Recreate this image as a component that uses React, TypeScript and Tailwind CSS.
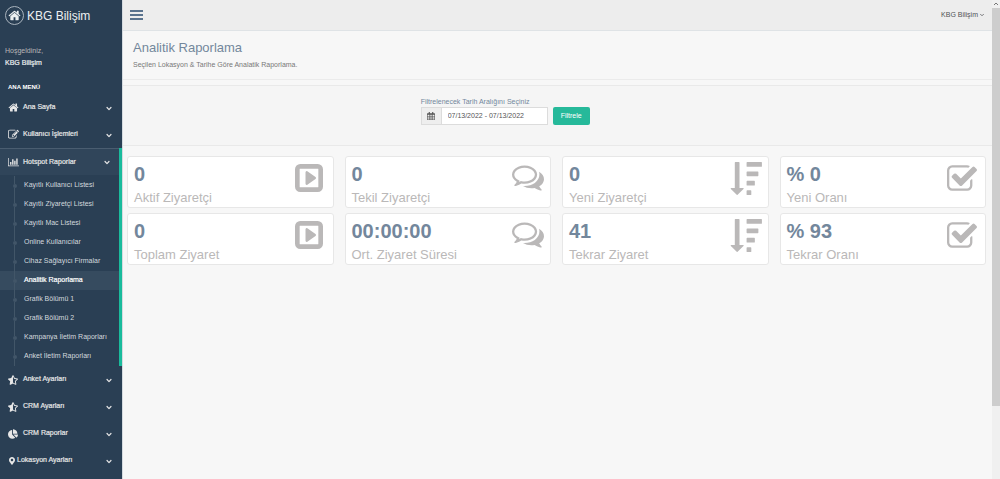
import { useState, type ReactNode } from 'react';
import { FaChartPie, FaMapMarkerAlt, FaStarHalfAlt } from 'react-icons/fa';

const HOME =
  'M1472 992v480q0 26-19 45t-45 19h-384v-384h-256v384h-384q-26 0-45-19t-19-45v-480q0-1 .5-3t.5-3l575-474 575 474q1 2 1 6zm223-69l-62 74q-8 9-21 11h-3q-13 0-21-7l-692-577-692 577q-12 8-24 7-13-2-21-11l-62-74q-8-10-7-23.5t11-21.5l719-599q32-26 76-26t76 26l244 204v-195q0-14 9-23t23-9h192q14 0 23 9t9 23v408l219 182q10 8 11 21.5t-7 23.5z';
const EDIT =
  'M888 1184l116-116-152-152-116 116v56h96v96h56zm440-720q-16-16-33 1l-350 350q-17 17-1 33t33-1l350-350q17-17 1-33zm80 594v190q0 119-84.5 203.5t-203.5 84.5h-832q-119 0-203.5-84.5t-84.5-203.5v-832q0-119 84.5-203.5t203.5-84.5h832q63 0 117 25 15 7 18 23 3 17-9 29l-49 49q-14 14-32 8-23-6-45-6h-832q-66 0-113 47t-47 113v832q0 66 47 113t113 47h832q66 0 113-47t47-113v-126q0-13 9-22l64-64q15-15 35-7t20 29zm-96-738l288 288-672 672h-288v-288zm444 132l-92 92-288-288 92-92q28-28 68-28t68 28l152 152q28 28 28 68t-28 68z';
const CHART =
  'M640 896v512h-256v-512h256zm384-512v1024h-256v-1024h256zm1024 1152v128h-2048v-1536h128v1408h1920zm-640-896v768h-256v-768h256zm384-384v1152h-256v-1152h256z';
const CHEVRON =
  'M1683 808l-742 741q-19 19-45 19t-45-19l-742-741q-19-19-19-45.5t19-45.5l166-165q19-19 45-19t45 19l531 531 531-531q19-19 45-19t45 19l166 165q19 19 19 45.5t-19 45.5z';
const PLAY =
  'M1280 896q0 33-27 52l-448 320q-31 23-66 4-34-17-34-56v-640q0-39 34-56 35-19 66 4l448 320q27 19 27 52zm128 480v-960q0-14-9-23t-23-9h-960q-14 0-23 9t-9 23v960q0 14 9 23t23 9h960q14 0 23-9t9-23zm256-960v960q0 119-84.5 203.5t-203.5 84.5h-960q-119 0-203.5-84.5t-84.5-203.5v-960q0-119 84.5-203.5t203.5-84.5h960q119 0 203.5 84.5t84.5 203.5z';
const COMMENTS =
  'M704 384q-153 0-286 52t-211.5 141-78.5 191q0 82 53 158t149 132l97 56-35 84q34-20 62-39l44-31 53 10q78 14 153 14 153 0 286-52t211.5-141 78.5-191-78.5-191-211.5-141-286-52zm0-128q191 0 353.5 68.5t256.5 186.5 94 257-94 257-256.5 186.5-353.5 68.5q-86 0-176-16-124 88-278 128-36 9-86 16h-3q-11 0-20.5-8t-11.5-21q-1-3-1-6.5t.5-6.5 2-6l2.5-5 3.5-5.5 4-5 4.5-5 4-4.5q5-6 23-25t26-29.5 22.5-29 25-38.5 20.5-44q-124-72-195-177t-71-224q0-139 94-257t256.5-186.5 353.5-68.5zm822 1169q10 24 20.5 44t25 38.5 22.5 29 26 29.5 23 25q1 1 4 4.5t4.5 5 4 5 3.5 5.5l2.5 5 2 6 .5 6.5-1 6.5q-3 14-13 22t-22 7q-50-7-86-16-154-40-278-128-90 16-176 16-271 0-472-132 58 4 88 4 161 0 309-45t264-129q125-92 192-212t67-254q0-77-23-152 129 71 204 178t75 230q0 120-71 224.5t-195 176.5z';
const SORT =
  'M736 1440q0 12-10 24l-319 319q-10 9-23 9-12 0-23-9l-320-320q-15-16-7-35 8-20 30-20h192v-1376q0-14 9-23t23-9h192q14 0 23 9t9 23v1376h192q14 0 23 9t9 23zM928 1536h192q32 0 32 32v192q0 32-32 32h-192q-32 0-32-32v-192q0-32 32-32zM928 1024h384q32 0 32 32v192q0 32-32 32h-384q-32 0-32-32v-192q0-32 32-32zM928 512h576q32 0 32 32v192q0 32-32 32h-576q-32 0-32-32v-192q0-32 32-32zM928 0h768q32 0 32 32v192q0 32-32 32h-768q-32 0-32-32v-192q0-32 32-32z';
const CHECK =
  'M1472 930v318q0 119-84.5 203.5t-203.5 84.5h-832q-119 0-203.5-84.5t-84.5-203.5v-832q0-119 84.5-203.5t203.5-84.5h832q63 0 117 25 15 7 18 23 3 17-9 29l-49 49q-10 10-23 10-3 0-9-2-23-6-45-6h-832q-66 0-113 47t-47 113v832q0 66 47 113t113 47h832q66 0 113-47t47-113v-254q0-13 9-22l64-64q10-10 23-10 6 0 12 3 20 8 20 29zm231-489l-814 814q-24 24-57 24t-57-24l-430-430q-24-24-24-57t24-57l110-110q24-24 57-24t57 24l263 263 647-647q24-24 57-24t57 24l110 110q24 24 24 57t-24 57z';

function Glyph({ d, box = '0 0 1792 1792', className }: { d: string; box?: string; className: string }) {
  return (
    <svg viewBox={box} fill="currentColor" aria-hidden="true" className={className}>
      <path d={d} />
    </svg>
  );
}

const reports = [
  'Kayıtlı Kullanıcı Listesi',
  'Kayıtlı Ziyaretçi Listesi',
  'Kayıtlı Mac Listesi',
  'Online Kullanıcılar',
  'Cihaz Sağlayıcı Firmalar',
  'Analitik Raporlama',
  'Grafik Bölümü 1',
  'Grafik Bölümü 2',
  'Kampanya İletim Raporları',
  'Anket İletim Raporları',
];

const play = <Glyph d={PLAY} box="128 128 1536 1536" className="mr-1 size-7" />;
const comments = <Glyph d={COMMENTS} box="0 256 1792 1408" className="h-[26px] w-8" />;
const sort = <Glyph d={SORT} box="0 0 1728 1792" className="h-[33px] w-8" />;
const check = <Glyph d={CHECK} box="64 128 1664 1408" className="mr-[2px] h-[26px] w-[30px]" />;

const stats = [
  { value: '0', label: 'Aktif Ziyaretçi', icon: play },
  { value: '0', label: 'Tekil Ziyaretçi', icon: comments },
  { value: '0', label: 'Yeni Ziyaretçi', icon: sort },
  { value: '% 0', label: 'Yeni Oranı', icon: check },
  { value: '0', label: 'Toplam Ziyaret', icon: play },
  { value: '00:00:00', label: 'Ort. Ziyaret Süresi', icon: comments },
  { value: '41', label: 'Tekrar Ziyaret', icon: sort },
  { value: '% 93', label: 'Tekrar Oranı', icon: check },
];

function MenuItem({
  icon,
  label,
  open = false,
  tight = false,
  onClick,
}: {
  icon: ReactNode;
  label: string;
  open?: boolean;
  tight?: boolean;
  onClick?: () => void;
}) {
  return (
    <button
      type="button"
      aria-expanded={open}
      onClick={onClick}
      className={`flex h-[27px] w-full items-center pl-2 text-left text-[7px] text-[#e7e7e7] ${
        open ? 'border-t border-[#4a5d70] bg-[#30455a] pr-[9px]' : 'pr-[10px]'
      }`}
    >
      <span className={tight ? 'w-[9px]' : 'w-[15px]'}>{icon}</span>
      <span className="flex-1 whitespace-nowrap [-webkit-text-stroke:0.2px]">{label}</span>
      <Glyph d={CHEVRON} className="size-[6px]" />
    </button>
  );
}

function Sidebar() {
  const [open, setOpen] = useState(true);
  const [active, setActive] = useState('Analitik Raporlama');

  return (
    <aside className="w-[123px] shrink-0 border-r border-[#d5dbe0] bg-[#2a3f54] text-[#ecf0f1]">
      <a href="#" className="flex h-[31px] items-center gap-[3px] pl-[5px] text-xs">
        <span className="flex size-[19px] items-center justify-center rounded-full border border-[#a9b3bd]">
          <Glyph d={HOME} className="size-[13px]" />
        </span>
        KBG Bilişim
      </a>

      <div className="mt-[14px] pl-[5px] text-[7px] leading-3">
        <p className="text-[#bab8b8]">Hoşgeldiniz,</p>
        <p className="[-webkit-text-stroke:0.2px]">KBG Bilişim</p>
      </div>

      <h3 className="mt-[13px] h-3 pl-2 text-[6px] leading-[10px] font-bold text-white">ANA MENÜ</h3>

      <nav>
        <MenuItem icon={<Glyph d={HOME} className="size-[11px]" />} label="Ana Sayfa" />
        <MenuItem icon={<Glyph d={EDIT} className="size-[11px]" />} label="Kullanıcı İşlemleri" />
        <div className="border-r-[3px] border-[#1abb9c]">
          <MenuItem
            icon={<Glyph d={CHART} box="0 0 2048 1792" className="h-[10px] w-[11px]" />}
            label="Hotspot Raporlar"
            open={open}
            onClick={() => setOpen(!open)}
          />
          {open && (
            <ul className="pt-px">
              {reports.map((item) => (
                <li key={item} className={item === active ? 'bg-[#364b5f]' : ''}>
                  <a
                    href="#"
                    onClick={() => setActive(item)}
                    className={`flex h-[19px] items-center text-[7px] whitespace-nowrap ${
                      item === active ? 'text-white [-webkit-text-stroke:0.2px]' : 'text-[#d3d9de]'
                    }`}
                  >
                    <span className="mr-[7px] ml-3 flex h-full w-[5px] flex-col items-center">
                      <span className="w-px flex-1 bg-[#425668]" />
                      <span className="size-1 rounded-full bg-[#425668]" />
                      <span className="w-px flex-1 bg-[#425668]" />
                    </span>
                    {item}
                  </a>
                </li>
              ))}
            </ul>
          )}
        </div>
        <MenuItem icon={<FaStarHalfAlt className="size-[10px]" />} label="Anket Ayarları" />
        <MenuItem icon={<FaStarHalfAlt className="size-[10px]" />} label="CRM Ayarları" />
        <MenuItem icon={<FaChartPie className="size-[10px]" />} label="CRM Raporlar" />
        <MenuItem icon={<FaMapMarkerAlt className="size-2" />} label="Lokasyon Ayarları" tight />
      </nav>
    </aside>
  );
}

function App() {
  const [range, setRange] = useState('07/13/2022 - 07/13/2022');

  return (
    <div className="flex min-h-screen bg-[#f7f7f7] font-['Liberation_Sans',Arial,sans-serif] text-[#73879c]">
      <Sidebar />

      <div className="min-w-0 flex-1">
        <header className="flex h-[31px] items-center justify-between border-b border-[#dfe3e6] bg-[#ededed] pr-2 pl-[7px]">
          <button type="button" aria-label="Menü" className="flex w-[13px] flex-col gap-[2px] text-[#5a738e]">
            <span className="h-[2px] bg-current" />
            <span className="h-[2px] bg-current" />
            <span className="h-[2px] bg-current" />
          </button>
          <button type="button" className="flex items-center gap-[2px] text-[7px] text-[#515356]">
            KBG Bilişim
            <svg viewBox="0 0 8 8" fill="none" stroke="currentColor" aria-hidden="true" className="size-1">
              <path strokeWidth="1.5" d="M0.5 2l3.5 3.5l3.5-3.5" />
            </svg>
          </button>
        </header>

        <main>
          <div className="h-[49px] border-b border-[#ebebeb] pt-2 pl-[10px]">
            <h1 className="text-[13px] leading-[18px]">Analitik Raporlama</h1>
            <p className="mt-[3px] text-[7px] leading-[10px] text-[#777]">
              Seçilen Lokasyon &amp; Tarihe Göre Analatik Raporlama.
            </p>
          </div>

          <form
            className="mt-[5px] grid h-[61px] grid-cols-3 border-y border-[#e9e9e9] bg-[#f5f5f5] pt-[11px]"
            onSubmit={(e) => e.preventDefault()}
          >
            <div className="col-start-2 flex items-start gap-[5px] pl-2">
              <div className="flex flex-col">
                <label htmlFor="range" className="text-[7px] leading-[10px]">
                  Filtrelenecek Tarih Aralığını Seçiniz
                </label>
                <div className="flex h-[18px] w-[127px] border border-[#dcdcdc] bg-white">
                  <span className="flex w-5 items-center justify-center border-r border-[#dcdcdc] bg-[#eee] text-[#555]">
                    <svg viewBox="0 0 14 14" fill="currentColor" aria-hidden="true" className="size-[8px]">
                      <path
                        fillRule="evenodd"
                        d="M1 2h2V0h2v2h4V0h2v2h2q1 0 1 1v10q0 1-1 1H1q-1 0-1-1V3q0-1 1-1zM1 5v2h2.500V5zM4.500 5v2h2V5zM7.500 5v2h2V5zM10.500 5v2H13V5zM1 8v2h2.500V8zM4.500 8v2h2V8zM7.500 8v2h2V8zM10.500 8v2H13V8zM1 11v2h2.500v-2zM4.500 11v2h2v-2zM7.500 11v2h2v-2zM10.500 11v2H13v-2z"
                      />
                    </svg>
                  </span>
                  <input
                    id="range"
                    type="text"
                    value={range}
                    onChange={(e) => setRange(e.target.value)}
                    className="min-w-0 flex-1 pl-[6px] text-[7px] text-[#555] outline-none"
                  />
                </div>
              </div>
              <button
                type="submit"
                className="mt-[10px] h-[18px] rounded-[2px] bg-[#26b99a] px-2 text-[7px] text-white"
              >
                Filtrele
              </button>
            </div>
          </form>

          <section className="grid grid-cols-4 gap-x-[11px] gap-y-[5px] pt-[10px] pr-[6px] pl-1">
            {stats.map((stat) => (
              <article
                key={stat.label}
                className="flex h-[52px] items-start justify-between rounded-[3px] border border-[#e7e7e7] bg-white px-[6px]"
              >
                <div className="pt-[5px]">
                  <p className="text-xl leading-6 font-bold">{stat.value}</p>
                  <h2 className="text-[13px] leading-6 text-[#bab8b8]">{stat.label}</h2>
                </div>
                <div className="flex h-[42px] items-center text-[#bab8b8]">{stat.icon}</div>
              </article>
            ))}
          </section>
        </main>
      </div>

      {/* scroll track */}
      <div className="flex w-2 shrink-0 flex-col bg-[#f0f0f0]">
        <svg viewBox="0 0 8 8" fill="none" stroke="#777" aria-hidden="true" className="size-2">
          <path d="M2 5l2-2l2 2" />
        </svg>
        <div className="h-[83%] bg-[#cdcdcd]" />
      </div>
    </div>
  );
}

export default App;
